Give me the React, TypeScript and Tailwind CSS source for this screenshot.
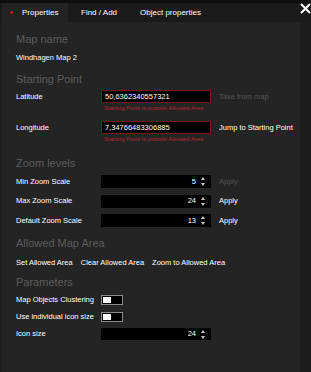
const font = { fontFamily: '"Liberation Sans", Arial, sans-serif' };

const Heading = ({ children }: { children: React.ReactNode }) => (
  <h2 className="text-[11px] leading-[14px] text-[#5c5c5c]">{children}</h2>
);

const Spinner = ({ value, tall = true }: { value: number; tall?: boolean }) => (
  <div className={`flex w-[110px] items-center justify-end bg-black pr-[6px] ${tall ? "h-[13px]" : "h-[12px]"}`}>
    <span className="text-white">{value}</span>
    <svg className="ml-[5px]" width="4" height="9" viewBox="0 0 4 9">
      <path d="M2 0 L4 3 L0 3 Z M0 6 L4 6 L2 9 Z" fill="#c8c8c8" />
    </svg>
  </div>
);

const Toggle = () => (
  <div className="flex h-[10px] w-[22px] items-center border border-[#8a8a8a] bg-black p-[1px]">
    <div className="h-full w-[8px] bg-white" />
  </div>
);

const App = () => {
  const zoomRows = [
    { label: "Min Zoom Scale", value: 5, active: false },
    { label: "Max Zoom Scale", value: 24, active: true },
    { label: "Default Zoom Scale", value: 13, active: true },
  ];

  return (
    <div className="relative flex h-[372px] w-[311px] flex-col overflow-hidden bg-[#1c1c1c]" style={font}>
      <div className="h-[3px] bg-[#0e0e0e]" />
      <div className="flex h-[19px] items-center bg-[#1a1a1a] pl-[2px] text-[8px] text-white">
        <div className="flex h-full w-[66px] items-center bg-[#232323] pl-[8px]">
          <span className="mr-[9px] h-[3px] w-[3px] rounded-full bg-[#e01010]" />
          Properties
        </div>
        <div className="ml-[13px]">Find / Add</div>
        <div className="ml-[23px]">Object properties</div>
      </div>
      <button className="absolute right-0 top-[3px] flex h-[11px] w-[11px] items-center justify-center">
        <svg width="11" height="11" viewBox="0 0 11 11">
          <path d="M1 1 L10 10 M10 1 L1 10" stroke="white" strokeWidth="2" />
        </svg>
      </button>

      <div className="flex flex-1 pl-[2px]">
        <div className="w-[298px] bg-[#242424] px-[14px] pt-[10px] text-[7.5px] leading-[10px] text-white">
          <Heading>Map name</Heading>
          <p className="mt-[7px]">Windhagen Map 2</p>

          <div className="mt-[9px]">
            <Heading>Starting Point</Heading>
          </div>
          <div className="mt-[4px] grid grid-cols-[85px_110px_1fr] items-center">
            <span>Latitude</span>
            <div className="flex h-[13px] items-center border border-[#6e1a1a] bg-black pl-[3px]">
              50,6362340557321
            </div>
            <span className="pl-[8px] text-[#555555]">Take from map</span>
            <span />
            <span className="mt-[1px] pl-[3px] text-[6px] leading-[8px] text-[#b3282a]">
              Starting Point is outside Allowed Area
            </span>
            <span />
          </div>
          <div className="mt-[9px] grid grid-cols-[85px_110px_1fr] items-center">
            <span>Longitude</span>
            <div className="flex h-[13px] items-center border border-[#6e1a1a] bg-black pl-[3px]">
              7,34766483306885
            </div>
            <span className="whitespace-nowrap pl-[8px]">Jump to Starting Point</span>
            <span />
            <span className="mt-[1px] pl-[3px] text-[6px] leading-[8px] text-[#b3282a]">
              Starting Point is outside Allowed Area
            </span>
            <span />
          </div>

          <div className="mt-[13px]">
            <Heading>Zoom levels</Heading>
          </div>
          <div className="mt-[5px] flex flex-col gap-[6.5px]">
            {zoomRows.map((r) => (
              <div key={r.label} className="grid grid-cols-[85px_110px_1fr] items-center">
                <span>{r.label}</span>
                <Spinner value={r.value} />
                <span className={`pl-[8px] ${r.active ? "text-white" : "text-[#555555]"}`}>Apply</span>
              </div>
            ))}
          </div>

          <div className="mt-[9px]">
            <Heading>Allowed Map Area</Heading>
          </div>
          <div className="mt-[8px] flex gap-[8px]">
            <span>Set Allowed Area</span>
            <span>Clear Allowed Area</span>
            <span>Zoom to Allowed Area</span>
          </div>

          <div className="mt-[7px]">
            <Heading>Parameters</Heading>
          </div>
          <div className="mt-[6px] flex flex-col gap-[7px]">
            <div className="grid grid-cols-[85px_1fr] items-center">
              <span className="whitespace-nowrap">Map Objects Clustering</span>
              <Toggle />
            </div>
            <div className="grid grid-cols-[85px_1fr] items-center">
              <span className="whitespace-nowrap">Use individual icon size</span>
              <Toggle />
            </div>
            <div className="-mt-[1px] grid grid-cols-[85px_1fr] items-center">
              <span>Icon size</span>
              <Spinner value={24} tall={false} />
            </div>
          </div>
        </div>
        <div className="flex-1 bg-[#1c1c1c]" />
      </div>
    </div>
  );
};

export default App;
